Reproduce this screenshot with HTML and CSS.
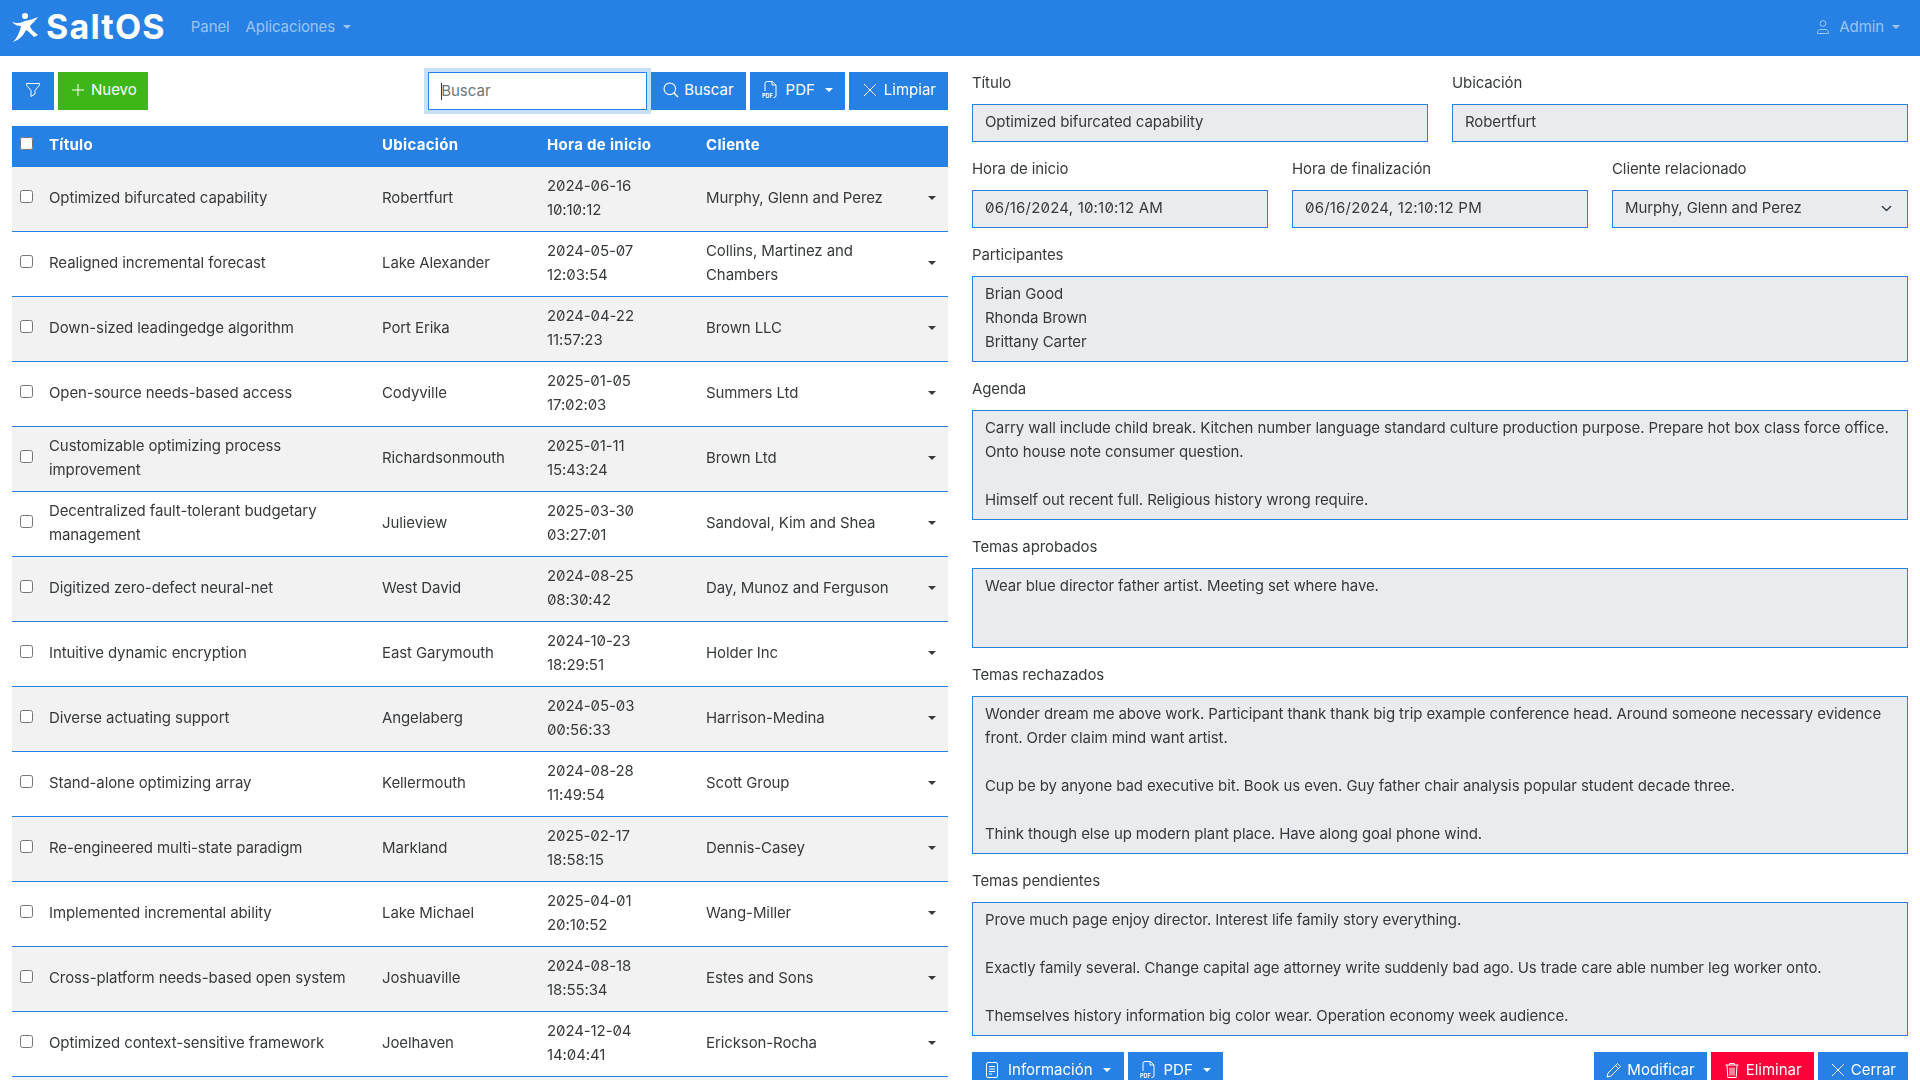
FILE: index.html
```html
<!DOCTYPE html>
<html lang="es">
<head>
    <meta charset="UTF-8">
    <meta name="viewport" content="width=device-width, initial-scale=1.0">
    <title>SaltOS</title>
    <link rel="stylesheet" href="styles.css">
</head>
<body>
    <nav class="navbar">
        <a class="brand">
            <svg class="brand-icon" viewBox="0 0 26 29" fill="#fff"><circle cx="13" cy="3" r="3"/><path d="M0 9C5 11 9 10 13 8C17 7 22 6 26 4C23 8 20 11 18 13C18 15 22 19 26 22L22 24C19 21 16 18 14 17C12 22 7 27 1 29C5 25 8 19 9 13C6 13 3 12 0 9Z"/></svg>
            <span>SaltOS</span>
        </a>
        <a class="nav-link">Panel</a>
        <a class="nav-link dropdown-toggle">Aplicaciones</a>
        <a class="nav-link dropdown-toggle nav-user">
            <svg class="icon" viewBox="0 0 16 16" fill="none" stroke="currentColor"><circle cx="8" cy="4.5" r="2.9"/><path d="M2.5 14.500v-1c0-1.800 1.500-3 3.500-3h4c2 0 3.500 1.200 3.500 3v1z"/></svg>
            Admin
        </a>
    </nav>

    <main class="page">
        <section class="list-col">
            <div class="toolbar">
                <div class="btn-group">
                    <button class="btn btn-filter"><svg class="icon" viewBox="0 0 16 16" fill="none" stroke="currentColor"><path d="M1.500 1.500h13v1.700L10 8.500v3.500l-4 2.500V8.500L1.500 3.200z"/></svg></button>
                    <button class="btn btn-green"><svg class="icon" viewBox="0 0 16 16" fill="none" stroke="currentColor"><path d="M8 2v12M2 8h12"/></svg>Nuevo</button>
                </div>
                <div class="btn-group">
                    <input class="search" type="text" placeholder="Buscar" autofocus>
                    <button class="btn btn-search"><svg class="icon" viewBox="0 0 16 16" fill="none" stroke="currentColor" stroke-width="1.100"><circle cx="6.800" cy="6.800" r="5.800"/><path d="M11 11l4 4" stroke-width="1.500"/></svg>Buscar</button>
                    <button class="btn dropdown-toggle btn-wide"><svg class="icon icon-file" viewBox="0 0 16 18" fill="none" stroke="currentColor"><path d="M3 10V2.500A2 2 0 0 1 5 .5h5.500L14 4v10.500a2 2 0 0 1-2 2h-.5"/><path d="M10 .5V4h4"/><text class="file-label" x="0" y="17">PDF</text></svg>PDF</button>
                    <button class="btn btn-clear"><svg class="icon" viewBox="0 0 16 16" fill="none" stroke="currentColor"><path d="M2 2l12 12M14 2L2 14"/></svg>Limpiar</button>
                </div>
            </div>

            <table class="grid">
                <colgroup>
                    <col class="col-check"><col class="col-title"><col class="col-place"><col class="col-date"><col class="col-client"><col class="col-menu">
                </colgroup>
                <thead>
                    <tr><th class="check"><input type="checkbox"></th><th>Título</th><th>Ubicación</th><th>Hora de inicio</th><th>Cliente</th><th></th></tr>
                </thead>
                <tbody>
                    <tr><td class="check"><input type="checkbox"></td><td>Optimized bifurcated capability</td><td>Robertfurt</td><td class="num">2024-06-16 10:10:12</td><td>Murphy, Glenn and Perez</td><td><span class="caret"></span></td></tr>
                    <tr><td class="check"><input type="checkbox"></td><td>Realigned incremental forecast</td><td>Lake Alexander</td><td class="num">2024-05-07 12:03:54</td><td>Collins, Martinez and Chambers</td><td><span class="caret"></span></td></tr>
                    <tr><td class="check"><input type="checkbox"></td><td>Down-sized leadingedge algorithm</td><td>Port Erika</td><td class="num">2024-04-22 11:57:23</td><td>Brown LLC</td><td><span class="caret"></span></td></tr>
                    <tr><td class="check"><input type="checkbox"></td><td>Open-source needs-based access</td><td>Codyville</td><td class="num">2025-01-05 17:02:03</td><td>Summers Ltd</td><td><span class="caret"></span></td></tr>
                    <tr><td class="check"><input type="checkbox"></td><td>Customizable optimizing process improvement</td><td>Richardsonmouth</td><td class="num">2025-01-11 15:43:24</td><td>Brown Ltd</td><td><span class="caret"></span></td></tr>
                    <tr><td class="check"><input type="checkbox"></td><td>Decentralized fault-tolerant budgetary management</td><td>Julieview</td><td class="num">2025-03-30 03:27:01</td><td>Sandoval, Kim and Shea</td><td><span class="caret"></span></td></tr>
                    <tr><td class="check"><input type="checkbox"></td><td>Digitized zero-defect neural-net</td><td>West David</td><td class="num">2024-08-25 08:30:42</td><td>Day, Munoz and Ferguson</td><td><span class="caret"></span></td></tr>
                    <tr><td class="check"><input type="checkbox"></td><td>Intuitive dynamic encryption</td><td>East Garymouth</td><td class="num">2024-10-23 18:29:51</td><td>Holder Inc</td><td><span class="caret"></span></td></tr>
                    <tr><td class="check"><input type="checkbox"></td><td>Diverse actuating support</td><td>Angelaberg</td><td class="num">2024-05-03 00:56:33</td><td>Harrison-Medina</td><td><span class="caret"></span></td></tr>
                    <tr><td class="check"><input type="checkbox"></td><td>Stand-alone optimizing array</td><td>Kellermouth</td><td class="num">2024-08-28 11:49:54</td><td>Scott Group</td><td><span class="caret"></span></td></tr>
                    <tr><td class="check"><input type="checkbox"></td><td>Re-engineered multi-state paradigm</td><td>Markland</td><td class="num">2025-02-17 18:58:15</td><td>Dennis-Casey</td><td><span class="caret"></span></td></tr>
                    <tr><td class="check"><input type="checkbox"></td><td>Implemented incremental ability</td><td>Lake Michael</td><td class="num">2025-04-01 20:10:52</td><td>Wang-Miller</td><td><span class="caret"></span></td></tr>
                    <tr><td class="check"><input type="checkbox"></td><td>Cross-platform needs-based open system</td><td>Joshuaville</td><td class="num">2024-08-18 18:55:34</td><td>Estes and Sons</td><td><span class="caret"></span></td></tr>
                    <tr><td class="check"><input type="checkbox"></td><td>Optimized context-sensitive framework</td><td>Joelhaven</td><td class="num">2024-12-04 14:04:41</td><td>Erickson-Rocha</td><td><span class="caret"></span></td></tr>
                    <tr class="row-cut"><td colspan="6"></td></tr>
                </tbody>
            </table>
        </section>

        <section class="form-col">
            <div class="form-row">
                <div class="field"><label>Título</label><div class="control">Optimized bifurcated capability</div></div>
                <div class="field"><label>Ubicación</label><div class="control">Robertfurt</div></div>
            </div>
            <div class="form-row">
                <div class="field"><label>Hora de inicio</label><div class="control num">06/16/2024, 10:10:12 AM</div></div>
                <div class="field"><label>Hora de finalización</label><div class="control num">06/16/2024, 12:10:12 PM</div></div>
                <div class="field">
                    <label>Cliente relacionado</label>
                    <div class="control control-select">Murphy, Glenn and Perez
                        <svg class="chevron" viewBox="0 0 16 16" fill="none" stroke="#343a40" stroke-width="2" stroke-linecap="round" stroke-linejoin="round"><path d="M2 5l6 6 6-6"/></svg>
                    </div>
                </div>
            </div>
            <div class="field"><label>Participantes</label><div class="control area">Brian Good
Rhonda Brown
Brittany Carter</div></div>
            <div class="field"><label>Agenda</label><div class="control area">Carry wall include child break. Kitchen number language standard culture production purpose. Prepare hot box class force office. Onto house note consumer question.

Himself out recent full. Religious history wrong require.</div></div>
            <div class="field"><label>Temas aprobados</label><div class="control area area-min">Wear blue director father artist. Meeting set where have.</div></div>
            <div class="field"><label>Temas rechazados</label><div class="control area">Wonder dream me above work. Participant thank thank big trip example conference head. Around someone necessary evidence front. Order claim mind want artist.

Cup be by anyone bad executive bit. Book us even. Guy father chair analysis popular student decade three.

Think though else up modern plant place. Have along goal phone wind.</div></div>
            <div class="field"><label>Temas pendientes</label><div class="control area">Prove much page enjoy director. Interest life family story everything.

Exactly family several. Change capital age attorney write suddenly bad ago. Us trade care able number leg worker onto.

Themselves history information big color wear. Operation economy week audience.</div></div>
            <div class="toolbar">
                <div class="btn-group">
                    <button class="btn dropdown-toggle btn-wide btn-info"><svg class="icon" viewBox="0 0 16 16" fill="none" stroke="currentColor"><rect x="2.500" y=".5" width="11" height="15" rx="1.500"/><path d="M5 4.500h6M5 7h6M5 9.500h6M5 12h3"/></svg>Información</button>
                    <button class="btn dropdown-toggle btn-wide"><svg class="icon icon-file" viewBox="0 0 16 18" fill="none" stroke="currentColor"><path d="M3 10V2.500A2 2 0 0 1 5 .5h5.500L14 4v10.500a2 2 0 0 1-2 2h-.5"/><path d="M10 .5V4h4"/><text class="file-label" x="0" y="17">PDF</text></svg>PDF</button>
                </div>
                <div class="btn-group">
                    <button class="btn btn-search"><svg class="icon" viewBox="0 0 16 16" fill="none" stroke="currentColor"><path d="M11.500 1.500l3 3L5 14l-4 1 1-4zM9.500 3.500l3 3"/></svg>Modificar</button>
                    <button class="btn btn-red"><svg class="icon" viewBox="0 0 16 16" fill="none" stroke="currentColor"><path d="M1.500 3h13M5.500 3V1.500h5V3M3 3l.8 12.500h8.400L13 3M6 5.500v8M8 5.500v8M10 5.500v8"/></svg>Eliminar</button>
                    <button class="btn btn-search"><svg class="icon" viewBox="0 0 16 16" fill="none" stroke="currentColor"><path d="M2 2l12 12M14 2L2 14"/></svg>Cerrar</button>
                </div>
            </div>
        </section>
    </main>
</body>
</html>
```

FILE: styles.css
```css
* {
    margin: 0;
    padding: 0;
    box-sizing: border-box;
}
html, body {
    height: 1080px;
    overflow: hidden;
}
body {
    font-family: 'Inter', 'Noto Sans', sans-serif;
    font-size: 15px;
    line-height: 24px;
    letter-spacing: -0.1px;
    color: #373a3c;
    background-color: #fff;
}
.navbar {
    display: flex;
    align-items: center;
    height: 56px;
    padding: 0 12px 2px;
    background-color: #2780e3;
}
.brand {
    display: flex;
    align-items: center;
    gap: 8px;
    margin-right: 17px;
    font-size: 34px;
    font-weight: 700;
    letter-spacing: 1.200px;
    color: #fff;
}
.brand-icon {
    width: 26px;
    height: 29px;
}
.nav-link {
    padding: 0 8px;
    color: rgba(255, 255, 255, 0.55);
}
.dropdown-toggle::after {
    content: "";
    display: inline-block;
    margin-left: 8px;
    vertical-align: 3px;
    border-top: 4.800px solid currentColor;
    border-left: 4.800px solid transparent;
    border-right: 4.800px solid transparent;
}
.nav-user {
    display: flex;
    align-items: center;
    gap: 8px;
    margin-left: auto;
}
.nav-user::after {
    margin-left: 0;
}
.page {
    display: grid;
    grid-template-columns: 936px 936px;
    gap: 24px;
    padding: 16px 12px 0;
}
.toolbar {
    display: flex;
    justify-content: space-between;
}
.btn-group {
    display: flex;
    gap: 4px;
}
.btn {
    display: flex;
    align-items: center;
    justify-content: center;
    gap: 6px;
    height: 38px;
    padding: 0 12px 2px;
    border: none;
    font: inherit;
    letter-spacing: 0;
    color: #fff;
    background-color: #2780e3;
}
.btn-filter {
    width: 42px;
}
.btn-green {
    gap: 5px;
    padding: 0 11px 2px 12px;
    background-color: #3fb618;
}
.btn-red {
    padding: 0 12px 2px 13px;
    background-color: #ff0039;
}
.btn-wide {
    gap: 8px;
}
.btn-search {
    gap: 5px;
}
.btn-clear {
    padding-left: 13px;
}
.btn-info {
    padding-right: 13px;
}
.btn.dropdown-toggle::after {
    margin-left: 2px;
    vertical-align: 0;
}
.icon {
    width: 16px;
    height: 16px;
    flex: none;
}
.icon-file {
    height: 18px;
}
.file-label {
    font-size: 5.500px;
    font-weight: 700;
    letter-spacing: 0;
    fill: currentColor;
    stroke: none;
}
.search {
    width: 219px;
    height: 38px;
    padding: 0 11px 2px 12px;
    border: 1px solid #2780e3;
    font: inherit;
    color: #373a3c;
    outline: none;
    background: linear-gradient(#373a3c, #373a3c) 12px 10px / 1px 17px no-repeat #fff;
}
.search:focus {
    box-shadow: 0 0 0 4px rgba(39, 128, 227, 0.25);
}
.search::placeholder {
    color: #6c757d;
}
.grid {
    width: 936px;
    margin-top: 16px;
    table-layout: fixed;
    border-collapse: collapse;
}
.col-check { width: 29px; }
.col-title { width: 333px; }
.col-place { width: 165px; }
.col-date { width: 159px; }
.col-client { width: 216px; }
.col-menu { width: 34px; }
.grid th {
    padding: 7px 8px 9px;
    text-align: left;
    font-weight: 700;
    letter-spacing: 0.300px;
    color: #fff;
    background-color: #2780e3;
    border-bottom: 1px solid #2780e3;
}
.grid td {
    padding: 7px 8px 9px;
    vertical-align: middle;
    border-bottom: 1px solid #2780e3;
}
.grid tbody tr:nth-child(odd) {
    background-color: #f2f2f2;
}
.row-cut td {
    height: 65px;
}
.num {
    font-feature-settings: "zero";
}
.grid .num {
    padding-right: 50px;
}
.grid .check {
    padding: 0 0 0 8px;
    vertical-align: middle;
}
.grid .check input {
    display: block;
    width: 13px;
    height: 13px;
    margin-bottom: 6px;
}
.caret {
    display: block;
    width: 0;
    margin-left: 6px;
    margin-top: -1px;
    border-top: 4px solid #373a3c;
    border-left: 4px solid transparent;
    border-right: 4px solid transparent;
}
.field {
    display: flex;
    flex-direction: column;
    flex: 1;
    min-width: 0;
    margin-bottom: 16px;
}
.field label {
    margin-top: -1px;
    margin-bottom: 9px;
}
.form-row {
    display: flex;
    gap: 24px;
}
.control {
    min-height: 38px;
    padding: 5px 12px 7px;
    border: 1px solid #2780e3;
    background-color: #e9ecef;
}
.control.num {
    letter-spacing: 0.200px;
}
.control-select {
    display: flex;
    align-items: center;
    justify-content: space-between;
}
.chevron {
    width: 11px;
    height: 11px;
    margin-right: 3px;
}
.area {
    white-space: pre-line;
}
.area-min {
    min-height: 80px;
}
```
